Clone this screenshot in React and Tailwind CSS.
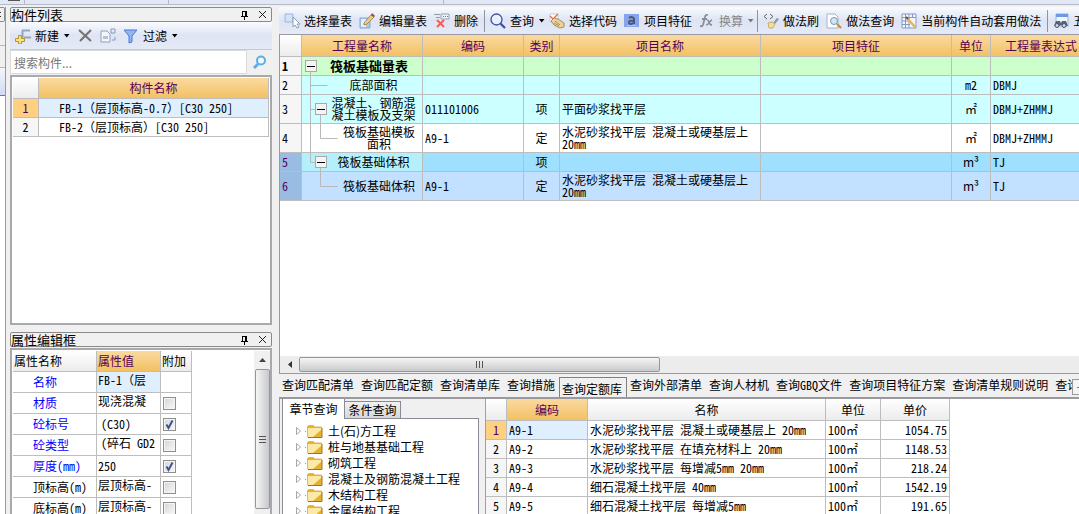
const quantityRows = [
  { id: 1, height: 'h-[19px]', bg: 'bg-[#ccffcc]', nameBg: 'bg-[#ccffcc]', tree: 'root', name: '筏板基础量表', bold: true },
  { id: 2, height: 'h-[19px]', bg: 'bg-[#ccffff]', nameBg: 'bg-[#ccffff]', tree: 'leaf', name: '底部面积', unit: 'm2', expr: 'DBMJ' },
  { id: 3, height: 'h-[29px]', bg: 'bg-[#ccffff]', nameBg: 'bg-[#ccffff]', tree: 'branch', name: '混凝土、钢筋混凝土模板及支架', code: '011101006', kind: '项', item: '平面砂浆找平层', unit: '㎡', expr: 'DBMJ+ZHMMJ' },
  { id: 4, height: 'h-[29px]', bg: 'bg-white', nameBg: 'bg-white', tree: 'child', name: '筏板基础模板面积', code: 'A9-1', kind: '定', item: '水泥砂浆找平层 混凝土或硬基层上 20mm', unit: '㎡', expr: 'DBMJ+ZHMMJ' },
  { id: 5, height: 'h-[19px]', bg: 'bg-[#9fe0ff]', nameBg: 'bg-[#b3f0fc]', tree: 'lastBranch', name: '筏板基础体积', kind: '项', unit: 'm³', expr: 'TJ', selected: true },
  { id: 6, height: 'h-[29px]', bg: 'bg-[#c2e0ff]', nameBg: 'bg-[#c2e0ff]', tree: 'lastChild', name: '筏板基础体积', code: 'A9-1', kind: '定', item: '水泥砂浆找平层 混凝土或硬基层上 20mm', unit: 'm³', expr: 'TJ', selected: true },
];

const properties = [
  { name: '名称', value: 'FB-1（层', blue: true, wraps: true, active: true },
  { name: '材质', value: '现浇混凝', blue: true, wraps: true, extra: false },
  { name: '砼标号', value: '(C30)', blue: true, indent: true, extra: true },
  { name: '砼类型', value: '(碎石 GD2', blue: true, wraps: true, indent: true, extra: false },
  { name: '厚度(mm)', value: '250', blue: true, extra: true },
  { name: '顶标高(m)', value: '层顶标高-', wraps: true, extra: false },
  { name: '底标高(m)', value: '层顶标高-', wraps: true, extra: false },
];

const quotas = [
  { code: 'A9-1', name: '水泥砂浆找平层 混凝土或硬基层上 20mm', price: '1054.75' },
  { code: 'A9-2', name: '水泥砂浆找平层 在填充材料上 20mm', price: '1148.53' },
  { code: 'A9-3', name: '水泥砂浆找平层 每增减5mm 20mm', price: '218.24' },
  { code: 'A9-4', name: '细石混凝土找平层 40mm', price: '1542.19' },
  { code: 'A9-5', name: '细石混凝土找平层 每增减5mm', price: '191.65' },
];

const queryTabs = ['查询匹配清单', '查询匹配定额', '查询清单库', '查询措施', '查询定额库', '查询外部清单', '查询人材机', '查询GBQ文件', '查询项目特征方案', '查询清单规则说明', '查询'];

const chapters = ['土(石)方工程', '桩与地基基础工程', '砌筑工程', '混凝土及钢筋混凝土工程', '木结构工程', '金属结构工程'];

const Icon = ({ children }) => (
  <svg width="16" height="16" viewBox="0 0 16 16" fill="none" className="shrink-0" aria-hidden="true">
    {children}
  </svg>
);

const SelectTableIcon = () => (
  <Icon>
    <path d="M1 1h8v8H1z" fill="#d3e3f7" stroke="#9db7dc" />
    <path d="M9 4v10l2-2 2 3 2-1-2-3h3z" fill="#fff" stroke="#8b9db5" />
  </Icon>
);

const EditTableIcon = () => (
  <Icon>
    <path d="M1 5h10v10H1z" fill="#a9c9e8" stroke="#86a9cd" />
    <path d="M2 6h5v8H2z" fill="#e5f1fa" />
    <path d="M5 10l7-8 3 2-7 7-3 1z" fill="#f1cd83" stroke="#a08a5c" />
    <path d="M12 2l1-2 3 3-1 1z" fill="#a4423a" />
  </Icon>
);

const DeleteIcon = () => (
  <Icon>
    <path d="M0 1.5h6M2 4.5h4" stroke="#999" />
    <path d="M7 1h8v5H7z" fill="#edf2f8" stroke="#91a3ba" />
    <path d="M9 3.5h1M11 3.5h1M13 3.5h1" stroke="#65809f" />
    <path d="M3 7l7 7M10 7l-7 7" stroke="#f0605a" strokeWidth="2" />
  </Icon>
);

const MagnifierIcon = () => (
  <Icon>
    <circle cx="6.5" cy="6.5" r="5.5" fill="#e7f0ff" stroke="#3f4f9e" strokeWidth="1.3" />
    <path d="M10.5 10.5l4.5 4.5" stroke="#3f4f9e" strokeWidth="2.2" />
  </Icon>
);

const CodeHandIcon = () => (
  <Icon>
    <path d="M1 1h8v8H1z" fill="#fff" stroke="#c9d0da" />
    <path d="M1 3l3 3 5-5" stroke="#e26e57" strokeWidth="1.4" />
    <path d="M2 8l3-3 4 1 6 4v4l-4 1-6-3z" fill="#ecd19a" stroke="#a98d5c" />
    <path d="M6 8l5 4M5 10l5 3" stroke="#a98d5c" />
  </Icon>
);

const FeatureIcon = () => (
  <Icon>
    <path d="M0 1h15v13H0z" fill="#86a3ec" />
    <path d="M5 5c2-1.500 5-1 5 1v5M10 7.500c-3 0-5 0-5 2s3 2 5 0" stroke="#4a5878" strokeWidth="2" />
    <path d="M3 12.500h9" stroke="#b4c6f5" />
  </Icon>
);

const FxIcon = () => (
  <Icon>
    <path d="M9 2c-3-1-3 2-4 6s-1 6-4 5M3 6h5" stroke="#8a9099" strokeWidth="1.8" />
    <path d="M8 7c3 0 1 5 5 5M13 7c-2 0-3 5-6 5" stroke="#8a9099" strokeWidth="1.6" />
  </Icon>
);

const BrushIcon = () => (
  <Icon>
    <path d="M4 1L1 3.500l3 2.500M7 1l3 2.500L7 6" stroke="#666" />
    <path d="M14 5l2 1-4 5-2-1z" fill="#8896ae" />
    <path d="M5 10l4-1 3 2-2 4H6z" fill="#f4dd94" stroke="#cbae68" />
  </Icon>
);

const PageSearchIcon = () => (
  <Icon>
    <path d="M1 1h8l3 3v11H1z" fill="#fff" stroke="#a6b2c4" />
    <circle cx="8" cy="8" r="3.500" fill="#cfe5fa" stroke="#7b94b5" />
    <path d="M11 11l4 4" stroke="#c18a4d" strokeWidth="2.200" />
  </Icon>
);

const AutoApplyIcon = () => (
  <Icon>
    <path d="M1 1h14v14H1z" fill="#f3f6fd" stroke="#8796c6" />
    <path d="M1 4.500h14M1 8h8M1 11.500h8M4.500 1v14M8 1v14M11.500 1v4" stroke="#8796c6" />
    <path d="M6 5l8 9" stroke="#e5b64f" strokeWidth="2.500" />
    <path d="M5 4l2 2" stroke="#555" strokeWidth="2" />
  </Icon>
);

const BinocularsIcon = () => (
  <Icon>
    <path d="M3 1h12v12H3z" fill="#eef5ff" stroke="#9bb5dd" />
    <path d="M3 1h12v3H3z" fill="#6b9be2" />
    <path d="M3 8h4l1 2 1-2h4l2 5h-5l-2-1-2 1H1z" fill="#56647a" />
    <circle cx="4" cy="12.500" r="2" fill="#c9d5e4" stroke="#465368" />
    <circle cx="11" cy="12.500" r="2" fill="#c9d5e4" stroke="#465368" />
  </Icon>
);

const Caret = ({ className = 'text-black' }) => (
  <svg width="7" height="4" viewBox="0 0 7 4" className={`shrink-0 ${className}`} aria-hidden="true">
    <path d="M1 0h5.500L3.700 3.500z" fill="currentColor" />
  </svg>
);

// Latin runs use the half-width forms, full-width brackets keep their own width
const WideText = ({ children }) =>
  children.split(/([（）])/).map((part, i) =>
    part === '（' || part === '）' ? (
      <span key={i} className="[font-feature-settings:normal]">{part}</span>
    ) : (
      part
    )
  );

const Separator = () => <div className="ml-[3px] mr-px h-[22px] w-px shrink-0 bg-[#8e939e]" />;

const ToolButton = ({ icon, label, menu, disabled }) => (
  <button
    type="button"
    disabled={disabled}
    className={`flex shrink-0 items-center gap-1 whitespace-nowrap pl-1 ${menu ? 'pr-0' : 'pr-[3px]'} ${disabled ? 'text-[#868686]' : 'text-black'}`}
  >
    {icon}
    {label}
    {menu && <Caret className={disabled ? 'text-[#777]' : 'text-black'} />}
  </button>
);

const PanelTitle = ({ children }) => (
  <div className="flex h-[15px] shrink-0 items-center justify-between rounded-[2px] border border-[#8a8a8a] bg-[#f0f0f0] pr-1">
    <h2 className="text-[13px] leading-[13px]">{children}</h2>
    <div className="flex items-center gap-[9px]">
      <button type="button" aria-label="固定">
        <svg width="9" height="10" viewBox="0 0 9 10" fill="none">
          <path d="M2.500 1v5M5.500 1v5M6.500 1v5M2 1.500h5M1 6.500h7M4.500 7v3" stroke="#000" />
        </svg>
      </button>
      <button type="button" aria-label="关闭">
        <svg width="9" height="9" viewBox="0 0 9 9" fill="none">
          <path d="M1 1l7 7M8 1L1 8" stroke="#222" />
        </svg>
      </button>
    </div>
  </div>
);

// Guide lines in front of each name; x positions follow the two nesting levels
const guides = {
  root: { width: 18, height: 18, path: 'M8.5 15v20' },
  leaf: { width: 27, height: 18, path: 'M8.5 0v40M8.5 9.5h17' },
  branch: { width: 27, height: 28, path: 'M8.5 0v40M8.5 14.5h10M18.5 20v20' },
  child: { width: 38, height: 28, path: 'M8.5 0v40M18.5 0v14.5h17' },
  lastBranch: { width: 27, height: 18, path: 'M8.5 0v9.5h10M18.5 15v20' },
  lastChild: { width: 38, height: 28, path: 'M18.5 0v14.5h17' },
};

const TreeName = ({ row }) => {
  const guide = guides[row.tree];
  const open = row.tree === 'root' || row.tree === 'branch' || row.tree === 'lastBranch';
  return (
    <div className="relative flex items-center">
      <svg width={guide.width} height={guide.height} className="shrink-0" fill="none" aria-hidden="true">
        <path d={guide.path} stroke="#b9b9b9" />
      </svg>
      {open && (
        <button
          type="button"
          aria-label="折叠"
          className={`absolute top-1/2 flex size-3 -translate-y-1/2 items-center justify-center border border-[#a9a9a9] bg-[#f4f4f4] ${row.tree === 'root' ? 'left-[3px]' : 'left-[13px]'}`}
        >
          <span className="h-px w-2 bg-black" />
        </button>
      )}
      <span className={`flex-1 pr-1 text-center ${row.bold ? 'text-[13px] font-bold' : ''}`}>{row.name}</span>
    </div>
  );
};

const headCell = 'border-r border-b border-[#bdbdbd] font-normal p-0';
const orangeHead = 'bg-linear-to-b from-[#fad9a0] to-[#f2c161] text-[#550055]';
const grayHead = 'bg-linear-to-b from-white to-[#ececec]';
const cell = 'border-r border-b border-[#bdbdbd] p-0';

const ComponentList = () => (
  <section className="flex min-h-0 flex-1 flex-col">
    <PanelTitle>构件列表</PanelTitle>
    <div className="flex h-7 shrink-0 items-center border-b border-[#c4c9d6] bg-linear-to-b from-[#f9fbfe] via-[#dee4f3] to-[#e4eaf7] pl-[5px]">
      <button type="button" className="flex items-center gap-1">
        <Icon>
          <path d="M7 2.500h8M9 9.500h7M7.500 2v8" stroke="#93a7c1" strokeWidth="2" />
          <path d="M3.500 7.500h3v3h3v3h-3v2.500h-3v-2.500h-3v-3h3z" fill="#f9e27a" stroke="#b59432" />
        </Icon>
        新建
        <Caret />
      </button>
      <button type="button" aria-label="删除" className="ml-2">
        <Icon>
          <path d="M1 2l12 11M13 2L2 13" stroke="#737373" strokeWidth="2" />
        </Icon>
      </button>
      <button type="button" aria-label="复制" className="ml-[6px]">
        <Icon>
          <path d="M1 3h6l3 3v8H1z" fill="#f2f5fa" stroke="#8f9fb8" />
          <path d="M3 8h5v3H3z" fill="#b6c2d3" />
          <path d="M11 1h4v4h-4zM15 9v3h-3" stroke="#8798bc" />
        </Icon>
      </button>
      <button type="button" className="ml-[7px] flex items-center gap-1">
        <Icon>
          <path d="M1 2h13L9 8v6l-3 1V8z" fill="#8fb5f2" stroke="#4d7bd0" />
        </Icon>
        过滤
        <Caret />
      </button>
    </div>
    <div className="flex h-6 shrink-0 items-center">
      <input
        type="text"
        aria-label="搜索构件"
        placeholder="搜索构件..."
        className="h-full min-w-0 flex-1 border border-[#dadada] bg-white px-[3px] [font-feature-settings:normal] placeholder:text-[#777]"
      />
      <button type="button" aria-label="搜索" className="flex w-[25px] justify-center">
        <Icon>
          <circle cx="9" cy="6.500" r="4" fill="#f2faff" stroke="#58afe6" strokeWidth="2" />
          <path d="M6 10l-4 4" stroke="#58afe6" strokeWidth="3" />
        </Icon>
      </button>
    </div>
    <div className="mt-px min-h-0 flex-1 overflow-hidden border-2 border-[#a9a9ad] bg-white p-px">
      <table className="w-full table-fixed border-separate border-spacing-0">
        <colgroup>
          <col className="w-[26px]" />
          <col />
        </colgroup>
        <thead>
          <tr className="h-[21px]">
            <th className={`${headCell} ${grayHead}`} />
            <th className={`${headCell} ${orangeHead}`}>构件名称</th>
          </tr>
        </thead>
        <tbody>
          <tr className="h-[19px]">
            <td className={`${cell} bg-[#ffd080] text-center text-[#550055]`}>1</td>
            <td className={`${cell} bg-[#dfeffe] pl-5`}><WideText>FB-1（层顶标高-0.7）[C30 250]</WideText></td>
          </tr>
          <tr className="h-[19px]">
            <td className={`${cell} bg-[#f6f6f6] text-center`}>2</td>
            <td className={`${cell} pl-5`}><WideText>FB-2（层顶标高）[C30 250]</WideText></td>
          </tr>
        </tbody>
      </table>
    </div>
  </section>
);

const PropertyEditor = () => (
  <section className="mt-[7px] flex h-[182px] shrink-0 flex-col">
    <PanelTitle>属性编辑框</PanelTitle>
    <div className="mt-px flex min-h-0 flex-1 justify-between overflow-hidden border-2 border-b-0 border-[#a9a9ad] bg-white pl-px pt-px">
      <table className="w-[179px] table-fixed self-start border-separate border-spacing-0">
        <colgroup>
          <col className="w-[84px]" />
          <col className="w-16" />
          <col className="w-[31px]" />
        </colgroup>
        <thead>
          <tr className="h-[21px] text-left">
            <th className={`${headCell} ${grayHead} pl-px`}>属性名称</th>
            <th className={`${headCell} ${orangeHead} pl-px`}>属性值</th>
            <th className={`${headCell} ${grayHead} pl-px`}>附加</th>
          </tr>
        </thead>
        <tbody>
          {properties.map((p) => (
            <tr key={p.name} className="h-[21px]">
              <td className={`${cell} pl-5 ${p.blue ? 'text-[#0000ff]' : 'text-black'}`}>{p.name}</td>
              <td className={`${cell} overflow-hidden whitespace-nowrap ${p.wraps ? 'pb-1' : ''} ${p.indent ? 'pl-1' : 'pl-px'} ${p.active ? 'bg-[#dfeffe]' : ''}`}>
                <WideText>{p.value}</WideText>
              </td>
              <td className={`${cell} pl-[2px]`}>
                {p.extra !== undefined && (
                  <span className="grid size-[13px]">
                    <input
                      type="checkbox"
                      aria-label={`附加 ${p.name}`}
                      defaultChecked={p.extra}
                      className="peer col-start-1 row-start-1 size-[13px] appearance-none border border-[#8e8f8f] bg-linear-to-br from-[#d4d6d9] to-[#f8f8f8] outline-1 -outline-offset-2 outline-[#f4f4f4]"
                    />
                    <svg viewBox="0 0 13 13" fill="none" className="pointer-events-none invisible col-start-1 row-start-1 peer-checked:visible">
                      <path d="M3.500 6.500L5.500 10 9.500 2.500" stroke="#41528f" strokeWidth="2" />
                    </svg>
                  </span>
                )}
              </td>
            </tr>
          ))}
        </tbody>
      </table>
      <div className="flex w-4 flex-col items-center bg-[#f0f0f0]">
        <button type="button" aria-label="向上滚动" className="flex h-[18px] w-full items-center justify-center">
          <svg width="7" height="4" viewBox="0 0 7 4">
            <path d="M0 4h7L3.500 0z" fill="#444" />
          </svg>
        </button>
        <div className="flex h-[140px] w-[15px] flex-col items-center justify-center gap-[2px] rounded-[2px] border border-[#979797] bg-linear-to-r from-[#f5f5f5] to-[#c9cacd]">
          <span className="h-px w-[7px] bg-[#555]" />
          <span className="h-px w-[7px] bg-[#555]" />
          <span className="h-px w-[7px] bg-[#555]" />
        </div>
      </div>
    </div>
  </section>
);

const QuantityToolbar = () => (
  <div className="flex h-[27px] shrink-0 items-center overflow-hidden bg-linear-to-b from-[#f9fbfe] via-[#dee4f3] to-[#e4eaf7] pl-px">
    <ToolButton icon={<SelectTableIcon />} label="选择量表" />
    <ToolButton icon={<EditTableIcon />} label="编辑量表" />
    <ToolButton icon={<DeleteIcon />} label="删除" />
    <Separator />
    <ToolButton icon={<MagnifierIcon />} label="查询" menu />
    <ToolButton icon={<CodeHandIcon />} label="选择代码" />
    <ToolButton icon={<FeatureIcon />} label="项目特征" />
    <ToolButton icon={<FxIcon />} label="换算" menu disabled />
    <Separator />
    <ToolButton icon={<BrushIcon />} label="做法刷" />
    <ToolButton icon={<PageSearchIcon />} label="做法查询" />
    <ToolButton icon={<AutoApplyIcon />} label="当前构件自动套用做法" />
    <Separator />
    <ToolButton icon={<BinocularsIcon />} label="五" />
  </div>
);

const QuantityTable = () => (
  <div className="min-h-0 flex-1 overflow-hidden bg-white">
    <table className="w-[812px] table-fixed border-separate border-spacing-0">
      <colgroup>
        <col className="w-[22px]" />
        <col className="w-[121px]" />
        <col className="w-[101px]" />
        <col className="w-9" />
        <col className="w-[201px]" />
        <col className="w-[191px]" />
        <col className="w-[39px]" />
        <col className="w-[101px]" />
      </colgroup>
      <thead>
        <tr className="h-[22px]">
          <th className={`${headCell} ${grayHead}`} />
          {['工程量名称', '编码', '类别', '项目名称', '项目特征', '单位', '工程量表达式'].map((h) => (
            <th key={h} className={`${headCell} ${orangeHead}`}>{h}</th>
          ))}
        </tr>
      </thead>
      <tbody className="leading-3">
        {quantityRows.map((row) => (
          <tr key={row.id} className={`${row.height} ${row.bg}`}>
            <td className={`${cell} pl-[2px] ${row.selected ? 'bg-[#99bce2] text-[#550055]' : 'bg-[#f6f6f6]'} ${row.bold ? 'font-bold' : ''}`}>{row.id}</td>
            <td className={`${cell} ${row.nameBg}`}>
              <TreeName row={row} />
            </td>
            <td className={`${cell} pl-[2px]`}>{row.code}</td>
            <td className={`${cell} text-center`}>{row.kind}</td>
            <td className={`${cell} pl-[2px]`}>{row.item}</td>
            <td className={cell} />
            <td className={`${cell} text-center ${row.unit === 'm³' ? '[font-feature-settings:normal]' : ''}`}>{row.unit}</td>
            <td className={`${cell} pl-[2px]`}>{row.expr}</td>
          </tr>
        ))}
      </tbody>
    </table>
  </div>
);

const HorizontalScrollbar = () => (
  <div className="flex h-[17px] shrink-0 items-center bg-[#ececec]">
    <button type="button" aria-label="向左滚动" className="flex h-full w-[19px] items-center justify-center">
      <svg width="4" height="7" viewBox="0 0 4 7">
        <path d="M4 0v7L0 3.500z" fill="#333" />
      </svg>
    </button>
    <div className="flex h-[15px] w-[361px] items-center justify-center gap-[2px] rounded-[2px] border border-[#979797] bg-linear-to-b from-[#f5f5f5] to-[#c9cacd]">
      <span className="h-[7px] w-px bg-[#555]" />
      <span className="h-[7px] w-px bg-[#555]" />
      <span className="h-[7px] w-px bg-[#555]" />
    </div>
  </div>
);

const QueryTabs = () => (
  <div className="flex h-[25px] shrink-0 items-end border-b-2 border-[#9a9a9e] bg-[#f0f0f0]">
    <div role="tablist" className="flex h-5 min-w-0 flex-1 overflow-hidden">
      {queryTabs.map((tab) => (
        <button
          key={tab}
          type="button"
          role="tab"
          aria-selected={tab === '查询定额库'}
          className={
            tab === '查询定额库'
              ? 'shrink-0 border border-b-0 border-[#808080] pl-[2px] pr-1 pt-[3px] leading-4'
              : 'shrink-0 whitespace-nowrap pb-1 pl-[3px] pr-1 leading-4'
          }
        >
          {tab}
        </button>
      ))}
    </div>
    <button type="button" aria-label="向左滚动标签" className="mb-[2px] flex h-4 w-[7px] items-center overflow-hidden border border-r-0 border-[#999] bg-[#f4f4f4] pl-1">
      <span className="h-px w-1 bg-[#5577cc]" />
    </button>
  </div>
);

const ChapterTree = () => (
  <div className="flex w-[197px] shrink-0 flex-col">
    <div role="tablist" className="flex h-5 shrink-0 items-end">
      <button type="button" role="tab" aria-selected="true" className="h-5 w-[63px] border-x border-[#8a8a94] bg-white pb-px">
        章节查询
      </button>
      <button type="button" role="tab" aria-selected="false" className="h-[18px] w-14 border border-l-0 border-[#8a8a94] bg-linear-to-b from-[#f2f2f2] to-[#d6d6d6]">
        条件查询
      </button>
      <div className="h-px flex-1 bg-[#8a8a94]" />
    </div>
    <ul className="min-h-0 flex-1 overflow-hidden border-x border-[#8a8a94] bg-white pt-1">
      {chapters.map((chapter) => (
        <li key={chapter} className="flex h-4 items-center whitespace-nowrap pl-3">
          <svg width="28" height="14" viewBox="0 0 28 14" fill="none" className="shrink-0" aria-hidden="true">
            <path d="M1.500 3.500v7l4-3.500z" fill="#fff" stroke="#a6a6a6" />
            <path d="M10 7.500h1" stroke="#999" />
            <path d="M12.500 2.500l1-1h5l1 1.500h7v10h-14z" fill="#e3b02f" stroke="#d9b765" />
            <path d="M13 4h13v2l-8 7h-5z" fill="#fce9a6" />
            <path d="M13 13.500h14V4" stroke="#9a7420" />
          </svg>
          <span className="pl-[5px] [font-feature-settings:normal]">{chapter}</span>
        </li>
      ))}
    </ul>
  </div>
);

const QuotaTable = () => (
  <div className="min-w-0 flex-1 overflow-hidden border-l border-[#a0a0a0] bg-white">
    <table className="w-[464px] table-fixed border-separate border-spacing-0">
      <colgroup>
        <col className="w-[21px]" />
        <col className="w-[81px]" />
        <col className="w-[238px]" />
        <col className="w-[55px]" />
        <col className="w-[69px]" />
      </colgroup>
      <thead>
        <tr className="h-[22px]">
          <th className={`${headCell} ${grayHead}`} />
          <th className={`${headCell} ${orangeHead}`}>编码</th>
          <th className={`${headCell} ${grayHead}`}>名称</th>
          <th className={`${headCell} ${grayHead}`}>单位</th>
          <th className={`${headCell} ${grayHead}`}>单价</th>
        </tr>
      </thead>
      <tbody>
        {quotas.map((q, i) => (
          <tr key={q.code} className="h-[19px]">
            <td className={`${cell} text-center ${i === 0 ? 'bg-[#ffd080] text-[#550055]' : 'bg-[#f6f6f6]'}`}>{i + 1}</td>
            <td className={`${cell} pl-[2px] ${i === 0 ? 'bg-[#dfeffe]' : ''}`}>{q.code}</td>
            <td className={`${cell} pl-[2px]`}>{q.name}</td>
            <td className={`${cell} pl-[2px]`}>100㎡</td>
            <td className={`${cell} pr-[2px] text-right`}>{q.price}</td>
          </tr>
        ))}
      </tbody>
    </table>
  </div>
);

export default function App() {
  return (
    <div className="flex h-screen flex-col overflow-hidden bg-[#f0f0f0] font-['Noto_Sans_CJK_SC',sans-serif] text-[12px] leading-4 text-black [font-feature-settings:'hwid']">
      {/* Lower edge of the ribbon */}
      <div className="flex h-[5px] shrink-0 border-b border-[#b4bac8] bg-[#e1e7f5]">
        <div className="ml-2 h-px w-3 bg-[#555]" />
        <div className="ml-1 w-[145px] border-x border-[#b4bac8]" />
        <div className="w-[275px] border-r border-[#b4bac8]" />
      </div>
      <div className="flex min-h-0 flex-1 pt-[2px]">
        <aside className="flex w-[6px] shrink-0 flex-col border-r border-[#9a9a9a]">
          <div className="flex h-[15px] flex-col items-start justify-center gap-[3px] rounded-r-[2px] border border-l-0 border-[#8a8a8a]">
            <span className="size-px bg-[#333]" />
            <span className="size-px bg-[#333]" />
          </div>
          <div className="h-6 border-b border-[#b5b5b5]" />
          <div className="h-[22px] border-b border-[#b5b5b5]" />
          <div className="h-7 border-b border-[#777] bg-linear-to-b from-[#f4f7fc] to-[#d0daf0]" />
          <div className="flex-1 bg-white" />
        </aside>
        <div className="ml-1 flex w-[262px] shrink-0 flex-col">
          <ComponentList />
          <PropertyEditor />
        </div>
        <main className="ml-[7px] flex min-w-0 flex-1 flex-col">
          <QuantityToolbar />
          <div className="flex min-h-0 flex-1 flex-col border-y border-l border-[#9a9a9e]">
            <QuantityTable />
            <HorizontalScrollbar />
          </div>
          <QueryTabs />
          <div className="flex h-[115px] shrink-0 gap-[6px] border-l border-[#9a9a9e] pl-[2px]">
            <ChapterTree />
            <QuotaTable />
          </div>
        </main>
      </div>
    </div>
  );
}
